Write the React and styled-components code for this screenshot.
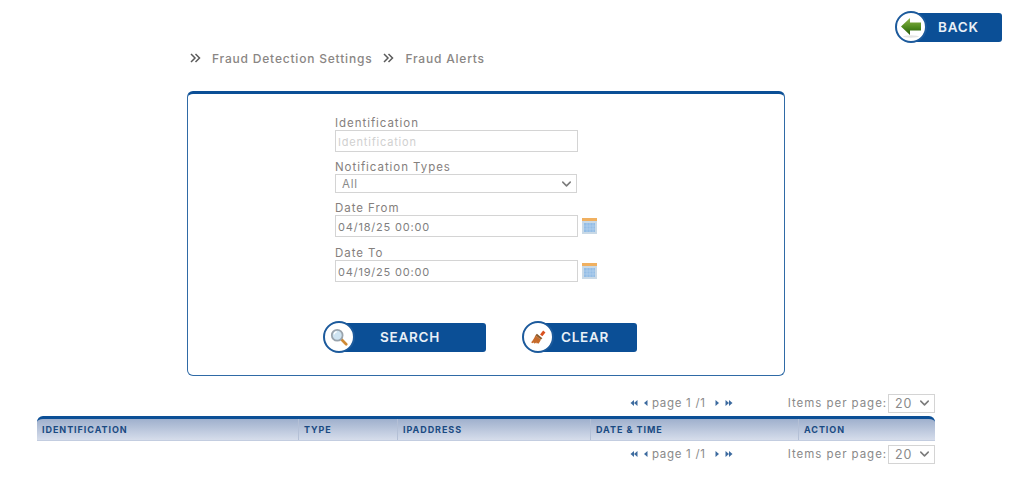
import React from "react";
import styled, { createGlobalStyle } from "styled-components";
import { ChevronDown } from "lucide-react";

const Global = createGlobalStyle`
  html, body {
    margin: 0;
    background: #fff;
    font-family: "Inter", "Open Sans", sans-serif;
  }
  * { box-sizing: border-box; }
`;

const Page = styled.div`
  width: 1024px;
  height: 483px;
  overflow: hidden;
  display: flex;
  flex-direction: column;
`;

const TopBar = styled.div`
  display: flex;
  justify-content: flex-end;
  padding: 11px 22px 0 0;
`;

const ActionButton = styled.button`
  position: relative;
  width: ${(p) => p.$width}px;
  height: 29px;
  margin: 2px 0 1px;
  padding: 0 0 2px ${(p) => p.$textLeft}px;
  border: 0;
  border-radius: 3px;
  background: linear-gradient(90deg, transparent 14px, #0b4f96 14px);
  color: #e9f0f7;
  font-family: inherit;
  font-size: 13.5px;
  font-weight: 600;
  letter-spacing: 0.75px;
  text-align: left;
`;

const IconCircle = styled.span`
  position: absolute;
  left: 0;
  top: -2px;
  width: 32px;
  height: 32px;
  border: 2px solid #1c5a9c;
  border-radius: 50%;
  background: #fff;
  display: flex;
  align-items: center;
  justify-content: center;
`;

const Breadcrumb = styled.nav`
  display: flex;
  align-items: center;
  height: 16px;
  margin: 7px 0 0 190px;
  color: #8a8684;
  font-size: 12px;
  font-weight: 500;
  letter-spacing: 0.8px;
`;

const CrumbText = styled.span`
  margin: 0 11px 0 11px;
`;

const Panel = styled.section`
  width: 598px;
  height: 285px;
  margin: 25px 0 0 187px;
  padding: 22px 0 0 147px;
  border: 1px solid #2f6aa6;
  border-top: 3px solid #0b4f96;
  border-radius: 6px;
`;

const Field = styled.div`
  display: flex;
  flex-direction: column;
  height: ${(p) => p.$height}px;
`;

const Label = styled.label`
  height: 14px;
  line-height: 14px;
  color: #85807d;
  font-size: 11.5px;
  font-weight: 400;
  letter-spacing: 0.95px;
`;

const InputRow = styled.div`
  display: flex;
  align-items: center;
`;

const TextInput = styled.input`
  width: 243px;
  height: 22px;
  padding: 1px 2px 0;
  border: 1px solid #d4d4d4;
  background: #fff;
  color: #7f7f7f;
  font-family: inherit;
  font-size: 11px;
  letter-spacing: 0.8px;
  outline: none;
  &::placeholder {
    color: #d0d0d0;
    opacity: 1;
  }
`;

const CalendarButton = styled.span`
  display: flex;
  margin-left: 4px;
`;

const SelectBox = styled.div`
  position: relative;
  display: flex;
  width: ${(p) => p.$width}px;
  height: ${(p) => p.$height}px;
`;

const NativeSelect = styled.select`
  appearance: none;
  width: 100%;
  height: 100%;
  padding: 0 0 0 ${(p) => p.$pad}px;
  border: 1px solid #d4d4d4;
  border-radius: 0;
  background: #fff;
  color: #8a8a8a;
  font-family: inherit;
  font-size: ${(p) => p.$size}px;
  letter-spacing: 0.8px;
  outline: none;
`;

const SelectArrow = styled(ChevronDown)`
  position: absolute;
  right: 3px;
  top: 50%;
  transform: translateY(-50%);
  color: #7c7c7c;
  pointer-events: none;
`;

const ButtonRow = styled.div`
  display: flex;
  gap: 36px;
  margin: 30px 0 0 -12px;
`;

const Results = styled.div`
  width: 898px;
  margin: 17px 0 0 37px;
`;

const PagerRow = styled.div`
  display: flex;
  align-items: center;
  height: 20px;
  margin-top: ${(p) => p.$top}px;
  color: #8a8a8a;
  font-size: 11.5px;
  letter-spacing: 0.95px;
`;

const PagerNav = styled.div`
  display: flex;
  align-items: center;
  gap: 5px;
  margin-left: 593px;
  width: 158px;
`;

const PageLabel = styled.span`
  margin: 0 4px 0 -1px;
  white-space: nowrap;
  letter-spacing: 0.7px;
`;

const ItemsLabel = styled.span`
  white-space: nowrap;
  margin-right: 1px;
`;

const HeadRow = styled.div`
  display: grid;
  grid-template-columns: 261px 99px 193px 208px 137px;
  height: 25px;
  margin-top: 3px;
  border-top: 3px solid #0b4f96;
  border-radius: 6px 6px 0 0;
  border-bottom: 1px solid #c3cde0;
  background: linear-gradient(#9fb0cd, #d6ddeb);
`;

const HeadCell = styled.div`
  display: flex;
  align-items: center;
  padding-left: 5px;
  border-left: ${(p) => (p.$first ? "0" : "1px solid #b4c0d6")};
  color: #1a4a82;
  font-size: 9px;
  font-weight: 700;
  letter-spacing: 0.95px;
`;

const Chevrons = () => (
  <svg width="11" height="10" viewBox="0 0 11 10" fill="none" stroke="#5b5b5b" strokeWidth="1.5">
    <path d="M1 1l4 4-4 4M5.5 1l4 4-4 4" />
  </svg>
);

const ArrowIcon = () => (
  <svg width="22" height="21" viewBox="0 0 22 21">
    <defs>
      <linearGradient id="arrowFill" x1="0" y1="0" x2="0" y2="1">
        <stop offset="0" stopColor="#8fb54a" />
        <stop offset="0.55" stopColor="#4f8a1e" />
        <stop offset="1" stopColor="#255808" />
      </linearGradient>
    </defs>
    <ellipse cx="11" cy="19.5" rx="8" ry="1.2" fill="#e4e4e4" />
    <path d="M1 9.5L10 1v4.5h11v8H10V18z" fill="url(#arrowFill)" />
  </svg>
);

const SearchIcon = () => (
  <svg width="18" height="18" viewBox="0 0 20 20">
    <path d="M12 12l6 6" stroke="#d08a35" strokeWidth="3" strokeLinecap="round" />
    <circle cx="8" cy="8" r="6" fill="#cfe4f2" stroke="#9aa4ad" strokeWidth="2" />
    <path d="M4.5 7a4 4 0 0 1 3-3" stroke="#fff" strokeWidth="1.4" fill="none" />
  </svg>
);

const BrushIcon = () => (
  <svg width="17" height="17" viewBox="0 0 22 22">
    <path d="M13 7l4-5 3 2.5-4 5z" fill="#d9501e" />
    <path d="M9 6l7 6-2 2-7-6z" fill="#8a5a2c" />
    <path d="M7 8l7 6c-1 2-2 4-3 5l-1-1-1 1-1-1.5-2 1.5-1-1.5-2 1-1.5-1.5c2-2 4-5 5.5-9z" fill="#c66b2b" />
  </svg>
);

const CalendarIcon = () => (
  <svg width="15" height="16" viewBox="0 0 15 16">
    <rect width="15" height="16" fill="#c9d9e6" />
    <rect width="15" height="3" fill="#f0b060" />
    <rect x="2" y="5" width="11" height="9" fill="#93bde6" />
    <path d="M5 5v9M8 5v9M11 5v9M2 8h11M2 11h11" stroke="#bcd6ee" strokeWidth="0.6" />
  </svg>
);

const PagerArrow = ({ dir, double }) => (
  <svg width={double ? 8 : 5} height="8" viewBox={double ? "0 0 8 8" : "0 0 5 8"} fill="#3d6b9f">
    <g transform={dir === "left" ? (double ? "matrix(-1 0 0 1 8 0)" : "matrix(-1 0 0 1 5 0)") : undefined}>
      <path d="M0.5 1l3.5 3-3.5 3z" />
      {double && <path d="M4 1l3.5 3L4 7z" />}
    </g>
  </svg>
);

const Pager = ({ top }) => (
  <PagerRow $top={top}>
    <PagerNav>
      <PagerArrow dir="left" double />
      <PagerArrow dir="left" />
      <PageLabel>page 1 /1</PageLabel>
      <PagerArrow dir="right" />
      <PagerArrow dir="right" double />
    </PagerNav>
    <ItemsLabel>Items per page:</ItemsLabel>
    <SelectBox $width={47} $height={19}>
      <NativeSelect $pad={6} $size={12.5} defaultValue="20">
        <option>20</option>
      </NativeSelect>
      <SelectArrow size={15} strokeWidth={2.5} />
    </SelectBox>
  </PagerRow>
);

export default function App() {
  return (
    <Page>
      <Global />
      <TopBar>
        <ActionButton $width={107} $textLeft={43}>
          <IconCircle>
            <ArrowIcon />
          </IconCircle>
          BACK
        </ActionButton>
      </TopBar>
      <Breadcrumb>
        <Chevrons />
        <CrumbText>Fraud Detection Settings</CrumbText>
        <Chevrons />
        <CrumbText>Fraud Alerts</CrumbText>
      </Breadcrumb>
      <Panel>
        <Field $height={44}>
          <Label>Identification</Label>
          <InputRow>
            <TextInput placeholder="Identification" />
          </InputRow>
        </Field>
        <Field $height={41}>
          <Label>Notification Types</Label>
          <InputRow>
            <SelectBox $width={242} $height={19}>
              <NativeSelect $pad={6} $size={11.5} defaultValue="All">
                <option>All</option>
              </NativeSelect>
              <SelectArrow size={15} strokeWidth={2.5} />
            </SelectBox>
          </InputRow>
        </Field>
        <Field $height={45}>
          <Label>Date From</Label>
          <InputRow>
            <TextInput defaultValue="04/18/25 00:00" />
            <CalendarButton>
              <CalendarIcon />
            </CalendarButton>
          </InputRow>
        </Field>
        <Field $height={45}>
          <Label>Date To</Label>
          <InputRow>
            <TextInput defaultValue="04/19/25 00:00" />
            <CalendarButton>
              <CalendarIcon />
            </CalendarButton>
          </InputRow>
        </Field>
        <ButtonRow>
          <ActionButton $width={163} $textLeft={57}>
            <IconCircle>
              <SearchIcon />
            </IconCircle>
            SEARCH
          </ActionButton>
          <ActionButton $width={115} $textLeft={39}>
            <IconCircle>
              <BrushIcon />
            </IconCircle>
            CLEAR
          </ActionButton>
        </ButtonRow>
      </Panel>
      <Results>
        <Pager top={0} />
        <HeadRow>
          <HeadCell $first>IDENTIFICATION</HeadCell>
          <HeadCell>TYPE</HeadCell>
          <HeadCell>IPADDRESS</HeadCell>
          <HeadCell>DATE &amp; TIME</HeadCell>
          <HeadCell>ACTION</HeadCell>
        </HeadRow>
        <Pager top={3} />
      </Results>
    </Page>
  );
}
